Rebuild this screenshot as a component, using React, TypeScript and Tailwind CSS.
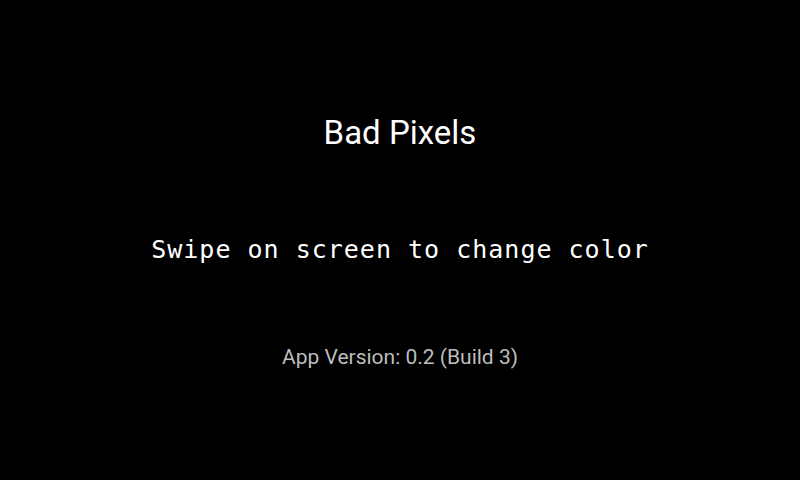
export default function App() {
  return (
    <div className="w-[800px] h-[480px] bg-black flex flex-col items-center">
      <h1 className="mt-[113px] text-[33px] leading-[40px] text-white font-['Roboto',sans-serif]">
        Bad Pixels
      </h1>
      <p className="mt-[82px] text-[25px] leading-[30px] tracking-[1px] text-white font-['DejaVu_Sans_Mono',monospace]">
        Swipe on screen to change color
      </p>
      <p className="mt-[79px] text-[21px] leading-[26px] text-[#bdbdbd] font-['Roboto',sans-serif]">
        App Version: 0.2 (Build 3)
      </p>
    </div>
  );
}
